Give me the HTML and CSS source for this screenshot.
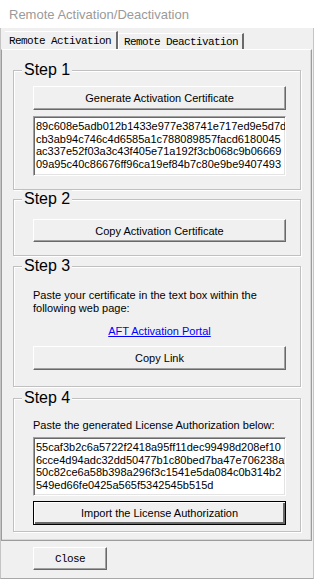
FILE: index.html
```html
<!DOCTYPE html>
<html lang="en">

<head>
    <meta charset="UTF-8">
    <meta name="viewport" content="width=device-width, initial-scale=1.0">
    <title>Remote Activation/Deactivation</title>
    <link rel="stylesheet" href="styles.css">
</head>

<body>
    <div class="window">
        <div class="titlebar">Remote Activation/Deactivation</div>

        <!-- Tab strip -->
        <div class="tabs">
            <div class="tab active">Remote Activation</div>
            <div class="tab">Remote Deactivation</div>
        </div>

        <div class="panel">
            <div class="group step1">
                <div class="group-title">Step 1</div>
                <button class="btn">Generate Activation Certificate</button>
                <div class="textbox">89c608e5adb012b1433e977e38741e717ed9e5d7d<br>cb3ab94c746c4d6585a1c788089857facd6180045<br>ac337e52f03a3c43f405e71a192f3cb068c9b06669<br>09a95c40c86676ff96ca19ef84b7c80e9be9407493</div>
            </div>

            <div class="group step2">
                <div class="group-title">Step 2</div>
                <button class="btn">Copy Activation Certificate</button>
            </div>

            <div class="group step3">
                <div class="group-title">Step 3</div>
                <p class="label">Paste your certificate in the text box within the following web page:</p>
                <a class="portal" href="#">AFT Activation Portal</a>
                <button class="btn">Copy Link</button>
            </div>

            <div class="group step4">
                <div class="group-title">Step 4</div>
                <p class="label">Paste the generated License Authorization below:</p>
                <div class="textbox">55caf3b2c6a5722f2418a95ff11dec99498d208ef10<br>6cce4d94adc32dd50477b1c80bed7ba47e706238a<br>50c82ce6a58b398a296f3c1541e5da084c0b314b2<br>549ed66fe0425a565f5342545b515d</div>
                <button class="btn default">Import the License Authorization</button>
            </div>
        </div>

        <div class="footer">
            <button class="btn close">Close</button>
        </div>
    </div>
</body>

</html>
```

FILE: styles.css
```css
/* Global styles */

body {
    margin: 0;
    background-color: #f0f0f0;
    font-family: "Liberation Sans", Arial, sans-serif;
    font-size: 11px;
    color: #000;
}

.window {
    width: 314px;
    height: 579px;
    box-sizing: border-box;
    display: flex;
    flex-direction: column;
    background-color: #f0f0f0;
    border-left: 1px solid #c4c4c4;
    border-right: 1px solid #c4c4c4;
    border-bottom: 1px solid #a8a8a8;
}
/* Title bar */

.titlebar {
    height: 28px;
    flex-shrink: 0;
    background-color: #fff;
    margin-left: -1px;
    margin-right: -1px;
    padding-left: 9px;
    font-size: 13px;
    line-height: 30px;
    color: #9a9a9a;
    /* Inactive caption text */
}
/* Tabs */

.tabs {
    display: flex;
    flex-shrink: 0;
    align-items: flex-end;
    height: 21px;
    padding-left: 4px;
    font-family: "Liberation Mono", "Courier New", monospace;
    font-size: 11px;
    letter-spacing: -0.6px;
}

.tab {
    height: 15px;
    line-height: 16px;
    padding: 0 4px 0 5px;
    border-top: 1px solid #fff;
    border-left: 1px solid #fff;
    border-right: 2px solid #6a6a6a;
}

.tab.active {
    height: 17px;
    line-height: 18px;
    padding: 0 5px 0 4px;
    border-left: none;
}
/* Tab page */

.panel {
    flex: 1;
    margin-right: 1px;
    border: 1px solid #9c9c9c;
    border-top-color: #fff;
    box-shadow: inset -1px -1px 0 #d8d8d8;
    padding-top: 20px;
}
/* Group boxes */

.group {
    width: 288px;
    box-sizing: border-box;
    margin-left: 11px;
    border: 1px solid #c0c0c0;
    box-shadow: 1px 1px 0 #fff, inset 1px 1px 0 #fff;
    padding: 0 14px 0 19px;
    display: flex;
    flex-direction: column;
}

.group-title {
    align-self: flex-start;
    margin: -10px 0 0 -11px;
    padding: 0 2px;
    background-color: #f0f0f0;
    font-size: 16px;
    line-height: 18px;
}
/* Buttons */

.btn {
    display: block;
    height: 24px;
    margin: 0;
    padding: 0;
    background-color: #f0f0f0;
    border: 1px solid;
    border-color: #fff #696969 #696969 #fff;
    box-shadow: inset -1px -1px 0 #a0a0a0;
    font-family: "Liberation Sans", Arial, sans-serif;
    font-size: 11px;
    color: #000;
}

.btn.default {
    border-color: #000;
    box-shadow: inset 1px 1px 0 #fff, inset -2px -2px 0 #696969;
}
/* Text boxes */

.textbox {
    height: 60px;
    box-sizing: border-box;
    background-color: #fff;
    border: 1px solid;
    border-color: #a0a0a0 #fff #fff #a0a0a0;
    box-shadow: inset 1px 1px 0 #696969, inset -1px -1px 0 #e3e3e3;
    padding: 3px 0 0 2px;
    line-height: 12.6px;
    white-space: nowrap;
    overflow: hidden;
}

.label {
    margin: 0;
    line-height: 13px;
}

.portal {
    align-self: center;
    line-height: 13px;
    color: #0000ff;
}
/* Step spacing */

.step1 .btn {
    margin-top: 7px;
}

.step1 .textbox {
    margin-top: 6px;
    margin-bottom: 13px;
}

.step2 {
    margin-top: 9px;
}

.step2 .btn {
    margin-top: 11px;
    margin-bottom: 13px;
    height: 23px;
}

.step3 {
    margin-top: 10px;
}

.step3 .label {
    margin-top: 14px;
    padding-right: 10px;
}

.step3 .portal {
    margin-top: 10px;
}

.step3 .btn {
    margin-top: 8px;
    margin-bottom: 16px;
}

.step4 {
    margin-top: 11px;
}

.step4 .label {
    margin-top: 12px;
}

.step4 .textbox {
    margin-top: 5px;
    height: 59px;
}

.step4 .btn {
    margin-top: 5px;
    margin-bottom: 6px;
}
/* Footer */

.footer {
    height: 37px;
    flex-shrink: 0;
    box-sizing: border-box;
    padding: 6px 0 0 32px;
}

.btn.close {
    width: 74px;
    height: 23px;
    font-family: "Liberation Mono", "Courier New", monospace;
    font-size: 11px;
    letter-spacing: -0.6px;
}
```
